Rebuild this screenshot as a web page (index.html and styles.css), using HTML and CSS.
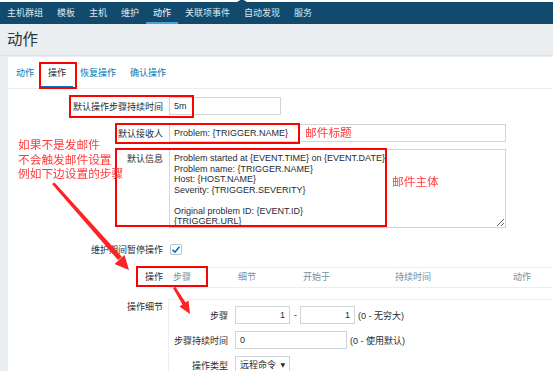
FILE: index.html
```html
<!DOCTYPE html>
<html lang="zh-CN">
<head>
  <meta charset="UTF-8">
  <title>动作</title>
  <link rel="stylesheet" href="styles.css">
</head>
<body>
<div class="page">
  <div class="topline"></div>
  <nav class="menu">
    <a>主机群组</a><a>模板</a><a>主机</a><a>维护</a><a class="active">动作</a><a>关联项事件</a><a>自动发现</a><a>服务</a>
  </nav>
  <header class="page-header"><h1>动作</h1></header>

  <div class="panel">
    <ul class="tabs">
      <li>动作</li>
      <li class="active">操作</li>
      <li>恢复操作</li>
      <li>确认操作</li>
    </ul>

    <div class="form">
      <div class="row r-duration">
        <label>默认操作步骤持续时间</label>
        <input type="text" class="in w-112" value="5m">
      </div>
      <div class="row r-subject">
        <label>默认接收人</label>
        <input type="text" class="in w-337" value="Problem: {TRIGGER.NAME}">
      </div>
      <div class="row r-message">
        <label>默认信息</label>
        <textarea class="in area">Problem started at {EVENT.TIME} on {EVENT.DATE}
Problem name: {TRIGGER.NAME}
Host: {HOST.NAME}
Severity: {TRIGGER.SEVERITY}

Original problem ID: {EVENT.ID}
{TRIGGER.URL}</textarea>
      </div>
      <div class="row r-pause">
        <label>维护期间暂停操作</label>
        <span class="check">
          <svg width="10" height="9" viewBox="0 0 10 9"><path d="M1.5 4.8 L4 7 L8.5 1.8" fill="none" stroke="#0275b8" stroke-width="1.6"/></svg>
        </span>
      </div>
      <div class="row r-ops">
        <label>操作</label>
        <div class="ops-table">
          <div class="ops-head">
            <span>步骤</span><span>细节</span><span>开始于</span><span>持续时间</span><span>动作</span>
          </div>
          <div class="ops-empty"></div>
        </div>
      </div>
      <div class="row r-details">
        <label>操作细节</label>
        <div class="details">
          <div class="sub-row">
            <label>步骤</label>
            <input type="text" class="in w-55 right" value="1">
            <span class="dash">-</span>
            <input type="text" class="in w-55 right" value="1">
            <span class="hint">(0 - 无穷大)</span>
          </div>
          <div class="sub-row">
            <label>步骤持续时间</label>
            <input type="text" class="in w-112" value="0">
            <span class="hint">(0 - 使用默认)</span>
          </div>
          <div class="sub-row">
            <label>操作类型</label>
            <span class="select">远程命令 <i>▼</i></span>
          </div>
        </div>
      </div>
    </div>
  </div>

  <!-- annotations drawn on top of the screenshot -->
  <div class="annot">
    <div class="box b-tab"></div>
    <div class="box b-duration"></div>
    <div class="box b-subject"></div>
    <div class="box b-message"></div>
    <div class="box b-ops"></div>
    <div class="note n-subject">邮件标题</div>
    <div class="note n-message">邮件主体</div>
    <div class="note n-left">如果不是发邮件<br>不会触发邮件设置<br>例如下边设置的步骤</div>
    <svg class="arrows" width="553" height="371" viewBox="0 0 553 371">
      <polygon points="52,184 54.5,182.5 122,257 118,260" fill="#f22"/>
      <polygon points="129,270 114.5,264 124.5,255" fill="#f22"/>
      <polygon points="173,288 175.5,287 186.5,304 183,305.5" fill="#f22"/>
      <polygon points="190,314 179.5,306.5 188.5,300.5" fill="#f22"/>
    </svg>
  </div>
</div>
</body>
</html>
```

FILE: styles.css
```css
body {
  margin: 0;
  background: #ebeef0;
  color: #1f2c33;
  font-family: "Liberation Sans", "Noto Sans CJK SC", sans-serif;
  font-size: 9px;
  overflow: hidden;
}
.page {
  position: relative;
  height: 371px;
}
.topline {
  height: 2px;
  background: #fff;
}
.menu {
  position: relative;
  display: flex;
  height: 22px;
  background: #124a6d;
  font-size: 9px;
}
.menu::before {
  content: "";
  position: absolute;
  top: -3px;
  left: 237px;
  border-left: 5px solid transparent;
  border-right: 5px solid transparent;
  border-bottom: 3px solid #124a6d;
}
.menu a {
  padding: 0 7px;
  line-height: 22px;
  color: #dfe7ec;
}
.menu a.active {
  color: #fff;
  box-shadow: inset 0 -2px 0 #4aa3d8;
}
.page-header {
  height: 31px;
  border-bottom: 1px solid #dde3e6;
  margin-bottom: 1px;
}
.page-header h1 {
  margin: 0;
  padding-left: 7px;
  font-size: 15.5px;
  font-weight: normal;
  line-height: 31px;
  color: #2a363d;
}
.panel {
  margin-left: 8px;
  background: #fff;
  height: 314px;
}
.tabs {
  display: flex;
  list-style: none;
  margin: 0;
  padding: 0 0 0 1px;
  border-bottom: 1px solid #ebeef0;
  font-size: 9px;
}
.tabs li {
  padding: 3px 7px 0;
  line-height: 26px;
  color: #0275b8;
  border-bottom: 2px solid transparent;
}
.tabs li.active {
  color: #1f2c33;
  border-bottom-color: #0275b8;
}
.form {
  padding-top: 8px;
}
.row {
  display: flex;
  align-items: center;
}
.row > label {
  width: 155px;
  margin-right: 6px;
  text-align: right;
  font-size: 9px;
  flex: none;
}
.in {
  box-sizing: border-box;
  height: 18px;
  padding: 0 4px;
  border: 1px solid #cdd6db;
  font: inherit;
  color: #1f2c33;
  background: #fff;
}
.in.right { text-align: right; }
.w-112 { width: 112px; }
.w-337 { width: 337px; }
.w-55 { width: 55px; }
.r-subject { margin-top: 9px; }
.r-message {
  margin-top: 7px;
  align-items: flex-start;
}
.r-message > label { padding-top: 3px; }
.area {
  width: 337px;
  height: 79px;
  padding: 3px 4px;
  line-height: 10.5px;
  resize: both;
}
.r-pause { margin-top: 15px; }
.check {
  box-sizing: border-box;
  width: 12px;
  height: 11px;
  margin-left: 1px;
  border: 1px solid #b9c4ca;
  border-radius: 2px;
  display: flex;
  align-items: center;
  justify-content: center;
}
.r-ops {
  margin-top: 11px;
  align-items: flex-start;
}
.r-ops > label { line-height: 18px; padding-top: 1px; }
.ops-table { flex: 1; }
.ops-head {
  display: grid;
  grid-template-columns: 65px 65px 92px 118px auto;
  height: 19px;
  border-top: 1px solid #ebeef0;
  border-bottom: 1px solid #ebeef0;
  color: #768d99;
  font-size: 9px;
  line-height: 19px;
}
.ops-head span { padding-left: 4px; }
.ops-empty {
  height: 11px;
  border-bottom: 1px solid #ebeef0;
}
.r-details { align-items: flex-start; }
.r-details > label {
  margin-right: 5px;
  line-height: 14px;
}
.details {
  flex: 1;
  border-left: 1px solid #ebeef0;
  padding-top: 6px;
  height: 80px;
}
.sub-row {
  display: flex;
  align-items: center;
  margin-bottom: 7px;
}
.sub-row label {
  width: 59px;
  margin-right: 7px;
  text-align: right;
  font-size: 9px;
  flex: none;
}
.dash { margin: 0 3px 0 4px; }
.hint { margin-left: 3px; }
.select {
  box-sizing: border-box;
  height: 18px;
  width: 55px;
  padding: 0 4px;
  border: 1px solid #cdd6db;
  font-size: 9px;
  line-height: 16px;
  white-space: nowrap;
}
.select i {
  font-style: normal;
  font-family: "DejaVu Sans", sans-serif;
  font-size: 6px;
  vertical-align: 1px;
  margin-left: 2px;
}
.annot {
  position: absolute;
  inset: 0;
  pointer-events: none;
}
.box {
  position: absolute;
  box-sizing: border-box;
  border: 2px solid #f00;
}
.b-tab { left: 39px; top: 62px; width: 38px; height: 27px; }
.b-duration { left: 69px; top: 95px; width: 125px; height: 23px; }
.b-subject { left: 115px; top: 123px; width: 185px; height: 21px; }
.b-message { left: 115px; top: 148px; width: 272px; height: 79px; }
.b-ops { left: 136px; top: 266px; width: 72px; height: 21px; }
.note {
  position: absolute;
  color: #ff3b3b;
  font-family: "Liberation Sans", "Noto Sans CJK SC", sans-serif;
  font-size: 11.7px;
  line-height: 14.5px;
  white-space: nowrap;
}
.n-subject { left: 305px; top: 126px; }
.n-message { left: 392px; top: 175px; }
.n-left { left: 18px; top: 138px; }
.arrows {
  position: absolute;
  left: 0;
  top: 0;
}
```
